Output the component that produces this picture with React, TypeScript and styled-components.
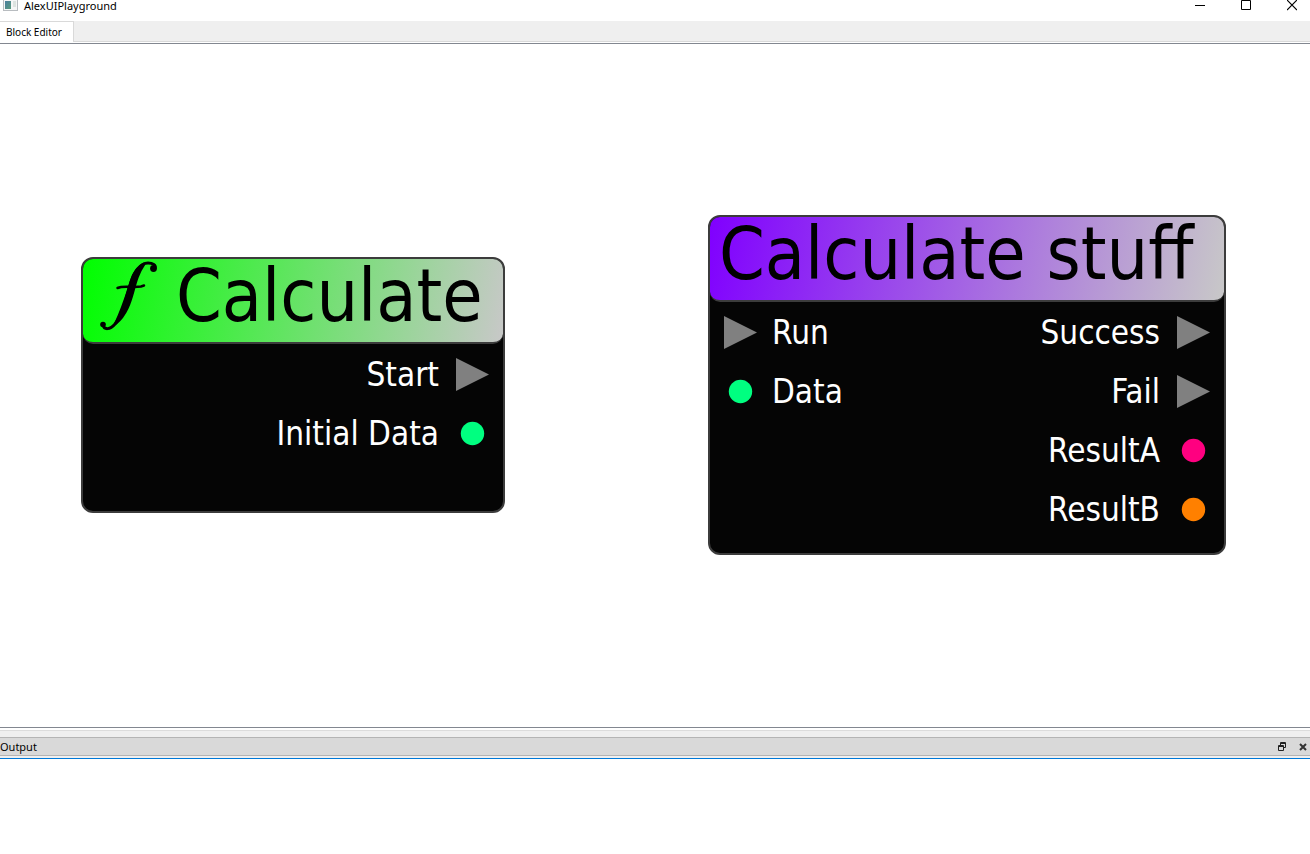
import React from 'react';
import styled, { createGlobalStyle } from 'styled-components';

const UI_FONT = '"Noto Sans", "Open Sans", sans-serif';
const NODE_FONT = '"DejaVu Sans Condensed", "DejaVu Sans", sans-serif';

const GlobalStyle = createGlobalStyle`
  *, *::before, *::after { box-sizing: border-box; }
  html, body, #root { height: 100%; }
  body {
    margin: 0;
    background: #fff;
    color: #000;
    font-family: ${UI_FONT};
    font-size: 11px;
    overflow: hidden;
  }
  button {
    display: flex;
    align-items: center;
    justify-content: center;
    padding: 0;
    border: 0;
    background: none;
    color: inherit;
    font: inherit;
  }
  svg { display: block; }
`;

const Window = styled.div`
  display: flex;
  flex-direction: column;
  height: 100%;
`;

const TitleBar = styled.header`
  display: flex;
  align-items: flex-start;
  height: 21px;
  padding-left: 3px;
  background: #fff;
`;

const WindowTitle = styled.h1`
  flex: 1;
  margin: 0 0 0 6px;
  font-size: 11px;
  line-height: 12px;
  font-weight: 400;
`;

const WindowButton = styled.button`
  width: 46px;
  height: 11px;
`;

const CaptionButtons = styled.div`
  display: flex;
  margin-right: -5px;
`;

const TabBar = styled.div`
  display: flex;
  height: 22px;
  border-bottom: 1px solid #fff;
  background: linear-gradient(#d9d9d9, #d9d9d9) bottom / 100% 1px no-repeat #efefef;
`;

const Tab = styled.button`
  && {
    padding: 0 11px 0 6px;
    border: solid #d9d9d9;
    border-width: 1px 1px 0 0;
    background: #fff;
    font-size: 10px;
  }
`;

const Canvas = styled.main`
  position: relative;
  flex: 1;
  border: solid #828790;
  border-width: 1px 0;
  background: #fff;
`;

const Node = styled.section<{ $x: number; $y: number; $width: number }>`
  position: absolute;
  left: ${(p) => p.$x}px;
  top: ${(p) => p.$y}px;
  width: ${(p) => p.$width}px;
  min-height: 256px;
  border: 2px solid #3c3c3c;
  border-radius: 12px;
  background: #050505;
  font-family: ${NODE_FONT};
`;

const NodeHeader = styled.div<{ $color: string }>`
  display: flex;
  align-items: flex-start;
  gap: 12px;
  height: 85px;
  padding: 0 9px;
  border-bottom: 2px solid #3c3c3c;
  border-radius: 10px;
  background: linear-gradient(101deg, ${(p) => p.$color}, #c8c8c8);
`;

const NodeTitle = styled.h2`
  margin: 0;
  color: #000;
  font-size: 73px;
  line-height: 74px;
  font-weight: 400;
  white-space: nowrap;
`;

const NodeBody = styled.div`
  display: flex;
  justify-content: space-between;
  padding: 1px 14px 14px;
`;

const PortList = styled.ul`
  margin: 0;
  padding: 0;
  list-style: none;
`;

const Port = styled.li<{ $output?: boolean }>`
  display: flex;
  flex-direction: ${(p) => (p.$output ? 'row-reverse' : 'row')};
  align-items: center;
  gap: ${(p) => (p.$output ? 17 : 15)}px;
  height: 59px;
  color: #fff;
  font-size: 33px;
  line-height: 40px;
`;

const Splitter = styled.div`
  height: 9px;
  border-top: 2px solid #fff;
  background: #efefef;
  box-shadow: inset 0 1px 0 #dcdcdc;
`;

const Dock = styled.section`
  height: 117px;
`;

const DockTitle = styled.div`
  display: flex;
  align-items: center;
  height: 19px;
  border: solid #b4b4b4;
  border-width: 1px 0;
  background: #d9d9d9;
`;

const DockName = styled.h2`
  flex: 1;
  margin: 0;
  font-size: 11px;
  line-height: 19px;
  font-weight: 400;
`;

const DockButton = styled.button`
  width: 21px;
  height: 16px;
`;

const DockActions = styled.div`
  display: flex;
  margin-right: -3px;
`;

const DockContent = styled.div`
  height: 98px;
  border-top: 2px solid #efefef;
  box-shadow: inset 0 1px 0 #0078d7;
`;

const AppIcon = () => (
  <svg width="15" height="11" viewBox="0 0 15 11" aria-hidden="true">
    <defs>
      <linearGradient id="pane" x1="0" y1="0" x2="1" y2="1">
        <stop offset="0" stopColor="#4a7fa0" />
        <stop offset="1" stopColor="#5a9a7c" />
      </linearGradient>
    </defs>
    <rect x="0.5" y="-2.5" width="14" height="13" fill="#f6f6f6" stroke="#b8bcc0" />
    <rect x="2" y="1" width="6" height="8" fill="url(#pane)" />
    <rect x="10" y="1" width="3" height="6" fill="#dde3e0" />
  </svg>
);

const FunctionIcon = () => (
  <svg width="72" height="76" viewBox="1 0 72 76" fill="none" stroke="#000" strokeLinecap="round" aria-hidden="true">
    <path d="M12 66C13 71 19 71 24 65C31 56 34 44 38 29C43 12 49 4 57 4C62 4 65 6 64 9" strokeWidth="3" />
    <path
      d="M50 7C43 12 41 19 39 27C35 39 31 51 25 64C35 56 39 43 42 32C45 21 47 14 53 5Z"
      fill="#000"
      strokeWidth="3"
      strokeLinejoin="round"
    />
    <circle cx="62.500" cy="9.500" r="3.400" fill="#000" stroke="none" />
    <circle cx="12" cy="65.500" r="2.800" fill="#000" stroke="none" />
    <path d="M26.500 29Q30 27.500 38 27.800T50 27.500L53 26.500" strokeWidth="2.500" />
  </svg>
);

const PortIcon = ({ color }: { color?: string }) => (
  <svg width="33" height="33" viewBox="0 0 33 33" aria-hidden="true">
    {color ? <circle cx="16.5" cy="16.5" r="11.7" fill={color} /> : <path d="M0 0 33 16.5 0 33Z" fill="#808080" />}
  </svg>
);

type PortSpec = { name: string; color?: string };

const Ports = ({ items, output }: { items: PortSpec[]; output?: boolean }) => (
  <PortList>
    {items.map((p) => (
      <Port key={p.name} $output={output}>
        <PortIcon color={p.color} />
        <span>{p.name}</span>
      </Port>
    ))}
  </PortList>
);

export default function App() {
  return (
    <Window>
      <GlobalStyle />
      <TitleBar>
        <AppIcon />
        <WindowTitle>AlexUIPlayground</WindowTitle>
        <CaptionButtons>
          <WindowButton aria-label="Minimize">
            <svg width="10" height="11" viewBox="0 0 10 11"><path d="M0 5.5H10" stroke="#000" /></svg>
          </WindowButton>
          <WindowButton aria-label="Maximize">
            <svg width="10" height="11" viewBox="0 0 10 11"><path d="M.5.5h9v9h-9z" fill="none" stroke="#000" /></svg>
          </WindowButton>
          <WindowButton aria-label="Close">
            <svg width="10" height="11" viewBox="0 0 10 11"><path d="M0 0 10 10M10 0 0 10" stroke="#000" strokeWidth="1.2" /></svg>
          </WindowButton>
        </CaptionButtons>
      </TitleBar>
      <TabBar role="tablist">
        <Tab role="tab" aria-selected="true">Block Editor</Tab>
      </TabBar>
      <Canvas>
        <Node $x={81} $y={213} $width={424}>
          <NodeHeader $color="#00ff00">
            <FunctionIcon />
            <NodeTitle>Calculate</NodeTitle>
          </NodeHeader>
          <NodeBody>
            <Ports items={[]} />
            <Ports output items={[{ name: 'Start' }, { name: 'Initial Data', color: '#00ff80' }]} />
          </NodeBody>
        </Node>
        <Node $x={708} $y={171} $width={518}>
          <NodeHeader $color="#8000ff">
            <NodeTitle>Calculate stuff</NodeTitle>
          </NodeHeader>
          <NodeBody>
            <Ports items={[{ name: 'Run' }, { name: 'Data', color: '#00ff80' }]} />
            <Ports
              output
              items={[
                { name: 'Success' },
                { name: 'Fail' },
                { name: 'ResultA', color: '#ff0080' },
                { name: 'ResultB', color: '#ff8000' },
              ]}
            />
          </NodeBody>
        </Node>
      </Canvas>
      <Splitter />
      <Dock>
        <DockTitle>
          <DockName>Output</DockName>
          <DockActions>
            <DockButton aria-label="Float">
              <svg width="8" height="9" viewBox="0 0 8 9" fill="none" stroke="#222"><path d="M2.5 3V.5h5v5H6M2 1.5h6M.5 3.5h5v5h-5zM0 4.5h6" /></svg>
            </DockButton>
            <DockButton aria-label="Close">
              <svg width="8" height="8" viewBox="0 0 8 8"><path d="M1 1 7 7M7 1 1 7" stroke="#333" strokeWidth="2" /></svg>
            </DockButton>
          </DockActions>
        </DockTitle>
        <DockContent />
      </Dock>
    </Window>
  );
}
